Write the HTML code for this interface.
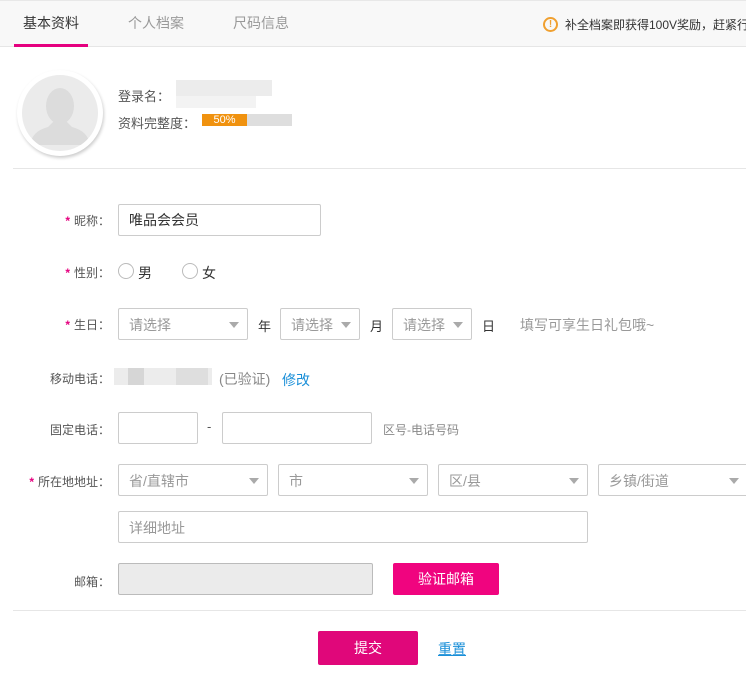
<!DOCTYPE html>
<html><head><meta charset="utf-8"><style>
*{margin:0;padding:0;box-sizing:border-box}
body{width:746px;height:688px;background:#fff;position:relative;overflow:hidden;font-family:"Liberation Sans","Noto Sans CJK SC",sans-serif;color:#333}
.a{position:absolute;white-space:nowrap}
.lbl{position:absolute;font-size:12px;color:#555;text-align:right;width:110px;left:0}
.star{color:#e5007f;font-weight:bold;margin-right:4px}
.box{position:absolute;border:1px solid #ccc;border-radius:2px;background:#fff;height:32px}
.sel{position:absolute;border:1px solid #ccc;border-radius:2px;background:#fff;height:32px;font-size:14px;color:#999;padding:6px 0 0 10px}
.sel:after{content:"";position:absolute;right:8px;top:13px;border-left:5px solid transparent;border-right:5px solid transparent;border-top:6px solid #aaa}
.sel.noarr:after{display:none}
.blur{position:absolute;background:#e6e6e6}
</style></head><body>
<div class="a" style="left:0;top:0;width:746px;height:47px;background:#f8f8f8;border-top:1px solid #e8e8e8;border-bottom:1px solid #e6e6e6"></div>
<div class="a" style="left:23px;top:13px;font-size:14px;color:#333">基本资料</div>
<div class="a" style="left:14px;top:44px;width:74px;height:3px;background:#e5007f"></div>
<div class="a" style="left:128px;top:13px;font-size:14px;color:#999">个人档案</div>
<div class="a" style="left:233px;top:13px;font-size:14px;color:#999">尺码信息</div>
<div class="a" style="left:543px;top:17px;width:15px;height:15px;border:2px solid #f0a030;border-radius:50%;color:#f0a030;font-size:10px;font-weight:bold;text-align:center;line-height:11px">!</div>
<div class="a" style="left:565px;top:16px;font-size:12px;color:#333">补全档案即获得100V奖励，赶紧行动吧</div>

<div class="a" style="left:17px;top:70px;width:86px;height:86px;border-radius:50%;background:#fff;box-shadow:1px 2px 3px rgba(0,0,0,.2)"></div>
<div class="a" style="left:22px;top:75px;width:76px;height:76px;border-radius:50%;background:#ebebeb;overflow:hidden">
<svg width="76" height="76" viewBox="0 0 76 76"><ellipse cx="38" cy="31" rx="14" ry="18" fill="#dcdcdc"/><path d="M8 70 Q10 56 26 52 L32 46 L44 46 L50 52 Q66 56 68 70 Z" fill="#dcdcdc"/></svg></div>
<div class="a" style="left:118px;top:86px;font-size:13px;color:#555">登录名：</div>
<div class="blur" style="left:176px;top:80px;width:96px;height:16px;background:#ececec"></div>
<div class="blur" style="left:176px;top:96px;width:80px;height:12px;background:#f3f3f3"></div>
<div class="a" style="left:118px;top:113px;font-size:13px;color:#555">资料完整度：</div>
<div class="a" style="left:202px;top:114px;width:90px;height:12px;background:#dedede"></div>
<div class="a" style="left:202px;top:114px;width:45px;height:12px;background:#f0920f;color:#fff;font-size:11px;line-height:12px;text-align:center">50%</div>
<div class="a" style="left:13px;top:168px;width:733px;height:1px;background:#e6e6e6"></div>

<div class="lbl" style="top:212px"><span class="star">*</span>昵称：</div>
<div class="box" style="left:118px;top:204px;width:203px;font-size:14px;padding:5px 10px;color:#333">唯品会会员</div>

<div class="lbl" style="top:264px"><span class="star">*</span>性别：</div>
<div class="a" style="left:118px;top:263px;width:16px;height:16px;border:1px solid #bbb;border-radius:50%"></div>
<div class="a" style="left:138px;top:263px;font-size:14px">男</div>
<div class="a" style="left:182px;top:263px;width:16px;height:16px;border:1px solid #bbb;border-radius:50%"></div>
<div class="a" style="left:202px;top:263px;font-size:14px">女</div>

<div class="lbl" style="top:316px"><span class="star">*</span>生日：</div>
<div class="sel" style="left:118px;top:308px;width:130px">请选择</div>
<div class="a" style="left:258px;top:316px;font-size:13px">年</div>
<div class="sel" style="left:280px;top:308px;width:80px">请选择</div>
<div class="a" style="left:370px;top:316px;font-size:13px">月</div>
<div class="sel" style="left:392px;top:308px;width:80px">请选择</div>
<div class="a" style="left:482px;top:316px;font-size:13px">日</div>
<div class="a" style="left:520px;top:315px;font-size:14px;color:#999">填写可享生日礼包哦~</div>

<div class="lbl" style="top:370px">移动电话：</div>
<div class="blur" style="left:114px;top:368px;width:98px;height:17px;background:#ececec"></div>
<div class="blur" style="left:128px;top:368px;width:16px;height:17px;background:#d6d6d6"></div>
<div class="blur" style="left:176px;top:368px;width:32px;height:17px;background:#dedede"></div>
<div class="a" style="left:219px;top:369px;font-size:14px;color:#888">(已验证)</div>
<div class="a" style="left:282px;top:370px;font-size:14px;color:#1a8fd8">修改</div>

<div class="lbl" style="top:421px">固定电话：</div>
<div class="box" style="left:118px;top:412px;width:80px"></div>
<div class="a" style="left:207px;top:419px;font-size:13px;color:#555">-</div>
<div class="box" style="left:222px;top:412px;width:150px"></div>
<div class="a" style="left:383px;top:421px;font-size:12px;color:#888">区号-电话号码</div>

<div class="lbl" style="top:473px"><span class="star">*</span>所在地地址：</div>
<div class="sel" style="left:118px;top:464px;width:150px">省/直辖市</div>
<div class="sel" style="left:278px;top:464px;width:150px">市</div>
<div class="sel" style="left:438px;top:464px;width:150px">区/县</div>
<div class="sel" style="left:598px;top:464px;width:150px">乡镇/街道</div>
<div class="sel noarr" style="left:118px;top:511px;width:470px">详细地址</div>

<div class="lbl" style="top:573px">邮箱：</div>
<div class="box" style="left:118px;top:563px;width:255px;background:#ebebeb;border-color:#bbb"></div>
<div class="a" style="left:393px;top:563px;width:106px;height:32px;background:#f0047f;border-radius:2px;color:#fff;font-size:14px;text-align:center;line-height:32px">验证邮箱</div>

<div class="a" style="left:13px;top:610px;width:733px;height:1px;background:#e6e6e6"></div>
<div class="a" style="left:318px;top:631px;width:100px;height:34px;background:#e0077a;border-radius:2px;color:#fff;font-size:14px;text-align:center;line-height:34px">提交</div>
<div class="a" style="left:438px;top:639px;font-size:14px;color:#1a8fd8;text-decoration:underline">重置</div>
</body></html>
